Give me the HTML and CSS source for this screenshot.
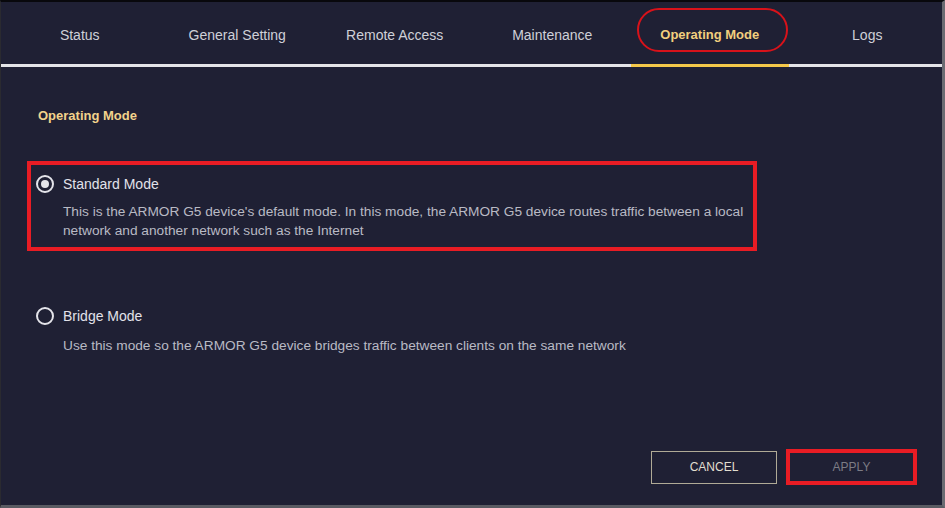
FILE: index.html
```html
<!DOCTYPE html>
<html>
<head>
<meta charset="utf-8">
<link rel="stylesheet" href="styles.css">
</head>
<body>
<div class="frame">
  <nav class="tabs">
    <div class="tab">Status</div>
    <div class="tab">General Setting</div>
    <div class="tab">Remote Access</div>
    <div class="tab">Maintenance</div>
    <div class="tab active"><span class="tab-label">Operating Mode</span></div>
    <div class="tab">Logs</div>
  </nav>
  <main class="content">
    <h2 class="heading">Operating Mode</h2>
    <div class="option highlight">
      <div class="option-row">
        <span class="radio checked"></span>
        <span class="option-title">Standard Mode</span>
      </div>
      <p class="option-desc">This is the ARMOR G5 device's default mode. In this mode, the ARMOR G5 device routes traffic between a local<br>network and another network such as the Internet</p>
    </div>
    <div class="option plain">
      <div class="option-row">
        <span class="radio"></span>
        <span class="option-title">Bridge Mode</span>
      </div>
      <p class="option-desc">Use this mode so the ARMOR G5 device bridges traffic between clients on the same network</p>
    </div>
  </main>
  <footer class="actions">
    <button class="btn btn-cancel">CANCEL</button>
    <div class="apply-mark"><button class="btn btn-apply">APPLY</button></div>
  </footer>
</div>
</body>
</html>
```
FILE: styles.css
```css
* { box-sizing: border-box; }
html, body { margin: 0; padding: 0; }
body {
  width: 945px;
  height: 508px;
  background: #3a3b44;
  font-family: "Liberation Sans", Arial, sans-serif;
  overflow: hidden;
}
.frame {
  width: 945px;
  height: 508px;
  background: #1f2034;
  border-top: 2px solid #08080c;
  border-left: 1px solid #2a2a30;
  border-right: 3px solid #6a6b72;
  border-bottom: 3px solid #5a5b62;
  display: flex;
  flex-direction: column;
  overflow: hidden;
}
.tabs {
  display: grid;
  grid-template-columns: repeat(6, 157.5px);
  height: 65px;
  border-bottom: 3px solid #e4e4e8;
}
.tab {
  position: relative;
  display: flex;
  align-items: center;
  justify-content: center;
  padding-top: 3px;
  font-size: 14px;
  color: #cfd0d8;
  margin-bottom: -3px;
  border-bottom: 3px solid transparent;
}
.tab.active {
  border-bottom-color: #f4c84a;
  color: #f2cf7e;
  font-weight: bold;
  font-size: 13px;
}
.tab.active::before {
  content: "";
  position: absolute;
  left: 6px;
  right: 1px;
  top: 6px;
  bottom: 12px;
  border: 2.5px solid #d8121a;
  border-radius: 24px;
}
.content {
  padding-left: 26px;
}
.heading {
  margin: 41px 0 37px 11px;
  font-size: 13px;
  line-height: 16px;
  font-weight: bold;
  color: #f2d38c;
}
.option {
  width: 730px;
  padding: 9px 5px 6px 5px;
  border: 4px solid transparent;
}
.option.highlight { border-color: #e81c24; }
.option.plain { margin-top: 42px; }
.option-row {
  display: flex;
  align-items: center;
  gap: 9px;
  height: 20px;
}
.radio {
  width: 18px;
  height: 18px;
  border-radius: 50%;
  border: 2px solid #e4e4ea;
  display: flex;
  align-items: center;
  justify-content: center;
}
.radio.checked::after {
  content: "";
  width: 8px;
  height: 8px;
  border-radius: 50%;
  background: #e4e4ea;
}
.option-title {
  font-size: 14px;
  color: #e2e2ea;
}
.option-desc {
  margin: 8px 0 0 27px;
  font-size: 13.7px;
  line-height: 19px;
  color: #b9bac4;
}
.option.highlight .option-desc { margin-top: 8px; padding-bottom: 1px; }
.option.plain .option-desc { margin-top: 10px; }
.actions {
  margin-top: auto;
  display: flex;
  justify-content: flex-end;
  align-items: center;
  gap: 9px;
  padding: 0 25px 20px 0;
}
.btn {
  font-family: "Liberation Sans", Arial, sans-serif;
  font-size: 12px;
  background: transparent;
  cursor: pointer;
}
.btn-cancel {
  width: 126px;
  height: 33px;
  border: 1px solid #b0aa96;
  color: #e2ded0;
}
.apply-mark {
  width: 131px;
  height: 36px;
  border: 4px solid #e81c24;
  display: flex;
}
.btn-apply {
  flex: 1;
  border: none;
  color: #7c7c84;
}
```
